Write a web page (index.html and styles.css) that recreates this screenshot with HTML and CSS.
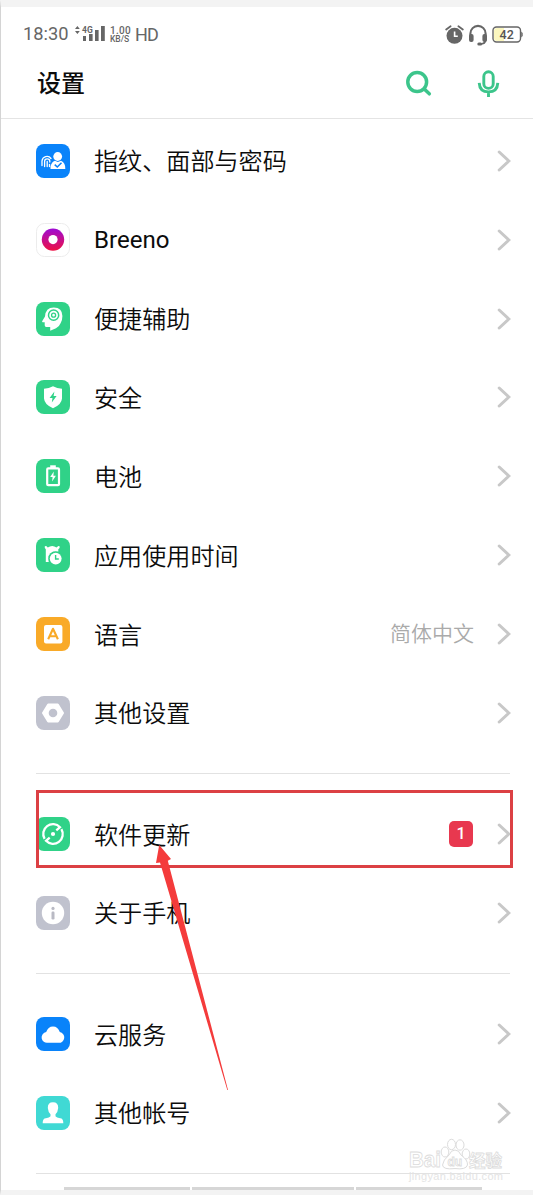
FILE: index.html
```
<!DOCTYPE html>
<html lang="zh-CN">
<head>
  <meta charset="utf-8">
  <title>设置</title>
  <link rel="stylesheet" href="styles.css">
</head>
<body>
<svg class="defs">
  <symbol id="arrow" viewBox="0 0 14 22"><path d="M2.2 2 L11.8 11 L2.2 20" fill="none" stroke="#c8c8c8" stroke-width="3" stroke-linecap="round" stroke-linejoin="miter"/></symbol>
</svg>

<div class="phone">
  <div class="status">
    <span class="clock">18:30</span>
    <svg class="signal" width="31" height="18" viewBox="0 0 31 18">
      <path d="M0 5 L2.4 2 L4.8 5z M0 7 L4.8 7 L2.4 10z" fill="#666"/>
      <g fill="#666"><rect x="8" y="12" width="3" height="5"/><rect x="14" y="10" width="3.6" height="7"/><rect x="20" y="6" width="3.6" height="11"/><rect x="26" y="2" width="3.8" height="15"/></g>
      <text x="7" y="8.6" class="net">4G</text>
    </svg>
    <div class="speed"><span class="rate">1.00</span><span>KB/S</span></div>
    <span class="hd">HD</span>
    <div class="status-right">
      <svg width="19" height="20" viewBox="0 0 19 20">
        <circle cx="9.5" cy="10.8" r="8" fill="#666"/>
        <path d="M1.2 4.5 L5.6 1.2 M17.8 4.5 L13.4 1.2" stroke="#666" stroke-width="1.8" stroke-linecap="round"/>
        <path d="M9.6 6.5 V11.3 H12.8" fill="none" stroke="#fff" stroke-width="1.6"/>
      </svg>
      <svg width="20" height="22" viewBox="0 0 20 22">
        <path d="M2.4 12 V9.5 A7.6 7.6 0 0 1 17.6 9.5 V12" fill="none" stroke="#666" stroke-width="2.1"/>
        <rect x="1" y="10" width="4.6" height="8" rx="2" fill="#666"/><rect x="14.4" y="10" width="4.6" height="8" rx="2" fill="#666"/>
        <path d="M17.5 16 Q17.5 20 12 20" fill="none" stroke="#666" stroke-width="1.7"/><rect x="9.3" y="18.4" width="4.8" height="3" rx="1.5" fill="#666"/>
      </svg>
      <svg width="31" height="17" viewBox="0 0 31 17">
        <rect x="1" y="1" width="27.5" height="15" rx="3.5" fill="#fff" stroke="#666" stroke-width="1.4"/>
        <path d="M5 2 H12 V15 H5 Q2 15 2 12 V5 Q2 2 5 2z" fill="#fbf7bf"/>
        <path d="M29.2 5.5 L30.7 7 V10 L29.2 11.5z" fill="#666"/>
        <text x="14.7" y="12.8" text-anchor="middle" class="level">42</text>
      </svg>
    </div>
  </div>

  <div class="header">
    <h1>设置</h1>
    <svg width="28" height="28" viewBox="0 0 28 28" fill="none" stroke="#3cc58b" stroke-width="3.5" stroke-linecap="round">
      <circle cx="12.2" cy="12" r="9.4"/><path d="M19.5 19.3 L24.3 23.8"/>
    </svg>
    <svg class="mic" width="24" height="28" viewBox="0 0 24 28" fill="none" stroke="#3cc58b" stroke-width="2.9">
      <rect x="6.8" y="1.8" width="9.4" height="16.6" rx="4.7"/><path d="M2.2 12.8 Q2.7 21.9 11.5 21.9 Q20.3 21.9 20.8 12.8 M11.5 22 V27"/>
    </svg>
  </div>

  <ul class="list">
    <li>
      <svg class="icon" viewBox="0 0 34 34"><rect width="34" height="34" rx="8" fill="#0983fa"/>
        <g fill="none" stroke="#fff" stroke-width="1.3" stroke-linecap="round"><path d="M6 21.5 V17 A5 5 0 0 1 15 14.5 M8.6 22.5 V17.5 A2.6 2.6 0 0 1 13.8 17.5 V18 M11.2 22.5 V17.5"/><path d="M13.5 20.5 V22.5"/></g>
        <circle cx="21.7" cy="12.5" r="4.4" fill="#fff"/><path d="M14.5 25 V22.5 Q15.5 18 19 16.8 L21.8 18 L25 16.8 Q29.5 18.5 29.3 25z" fill="#fff"/>
        <path d="M18.7 20.6 L21.3 23 L25.5 18.8" fill="none" stroke="#0983fa" stroke-width="1.5"/></svg>
      <span class="name">指纹、面部与密码</span><svg class="go"><use href="#arrow"/></svg>
    </li>
    <li>
      <svg class="icon" viewBox="0 0 34 34"><defs><linearGradient id="ring" x1="0" y1="0" x2="0" y2="1"><stop offset="0" stop-color="#9d0bd5"/><stop offset="1" stop-color="#ee1144"/></linearGradient></defs>
        <rect x=".5" y=".5" width="33" height="33" rx="8" fill="#fff" stroke="#ececec"/><circle cx="17" cy="16.6" r="11.2" fill="url(#ring)"/><circle cx="17" cy="16.6" r="4.6" fill="#fff"/></svg>
      <span class="name latin">Breeno</span><svg class="go"><use href="#arrow"/></svg>
    </li>
    <li>
      <svg class="icon" viewBox="0 0 34 34"><rect width="34" height="34" rx="8" fill="#30d288"/>
        <path d="M14.2 28.8 V25 H10.2 Q8.7 25 8.7 23.2 V20.2 H6.6 Q5.7 20 6.3 19 L9 14.5 Q9.5 5.4 17.8 5.4 Q26.4 5.6 26.4 14 Q26.4 18.2 24.7 21 Q23.3 24.7 20 26.2z" fill="#fff"/>
        <circle cx="17.6" cy="13.2" r="5.1" fill="none" stroke="#30d288" stroke-width="1.5"/><circle cx="17.6" cy="13.2" r="2" fill="none" stroke="#30d288" stroke-width="1.3"/></svg>
      <span class="name">便捷辅助</span><svg class="go"><use href="#arrow"/></svg>
    </li>
    <li>
      <svg class="icon" viewBox="0 0 34 34"><rect width="34" height="34" rx="8" fill="#30d288"/>
        <path d="M17 6.2 Q21 8.6 26 8.8 V18.5 Q25.5 24.7 17 28.2 Q8.5 24.7 8 18.5 V8.8 Q13 8.6 17 6.2z" fill="#fff"/>
        <path d="M18.4 11.5 L13.6 17.9 H16.5 L15.8 22.4 L20.6 16 H17.6z" fill="#30d288"/></svg>
      <span class="name">安全</span><svg class="go"><use href="#arrow"/></svg>
    </li>
    <li>
      <svg class="icon" viewBox="0 0 34 34"><rect width="34" height="34" rx="8" fill="#30d288"/>
        <rect x="14.2" y="6.3" width="5.6" height="3" fill="#fff"/><rect x="11.2" y="9.4" width="11.8" height="16.8" rx="1" fill="none" stroke="#fff" stroke-width="2.2"/>
        <path d="M17.8 12.6 L14.2 18 H16.6 L16.1 22.4 L19.9 16.8 H17.4z" fill="#fff"/></svg>
      <span class="name">电池</span><svg class="go"><use href="#arrow"/></svg>
    </li>
    <li>
      <svg class="icon" viewBox="0 0 34 34"><rect width="34" height="34" rx="8" fill="#30d288"/>
        <path d="M8.8 8.2 L10.2 8 L11.8 9.5 Q16.2 6.3 20.5 9.5 L22.3 8 L23.6 8.2 V10 L22.3 11.2 V13.8 H17 L12.7 18 V24 H9.8 V11.2 L8.8 10z" fill="#fff"/>
        <circle cx="19.7" cy="20.6" r="7.4" fill="#30d288"/><circle cx="19.7" cy="20.6" r="5.9" fill="#fff"/><path d="M19.6 17 V21 H22.8" fill="none" stroke="#30d288" stroke-width="1.4"/></svg>
      <span class="name">应用使用时间</span><svg class="go"><use href="#arrow"/></svg>
    </li>
    <li>
      <svg class="icon" viewBox="0 0 34 34"><rect width="34" height="34" rx="8" fill="#f9aa28"/>
        <rect x="8" y="8" width="18.4" height="18.4" rx="2" fill="#fff"/><path d="M12.2 22.3 L17 11.8 L21.9 22.3 M14 19.3 H20" fill="none" stroke="#f9aa28" stroke-width="2.1" stroke-linejoin="round"/></svg>
      <span class="name">语言</span><span class="value">简体中文</span><svg class="go"><use href="#arrow"/></svg>
    </li>
    <li>
      <svg class="icon" viewBox="0 0 34 34"><rect width="34" height="34" rx="8" fill="#c0c2ce"/>
        <path d="M12.2 8.5 H21.8 L27 17 L21.8 25.5 H12.2 L7 17z" fill="#fff" stroke="#fff" stroke-width="2" stroke-linejoin="round"/><circle cx="17" cy="17" r="4.3" fill="#c0c2ce"/></svg>
      <span class="name">其他设置</span><svg class="go"><use href="#arrow"/></svg>
    </li>
  </ul>

  <ul class="list">
    <li>
      <svg class="icon" viewBox="0 0 34 34"><rect width="34" height="34" rx="8" fill="#30d288"/>
        <g fill="none" stroke="#fff" stroke-width="2.3"><path d="M8.6 21.8 A9.7 9.7 0 0 1 24 10.2 L20.3 13.4 M25.4 12.2 A9.7 9.7 0 0 1 10 23.8 L13.7 20.6"/></g><circle cx="17" cy="17" r="2.1" fill="#fff"/></svg>
      <span class="name">软件更新</span><span class="badge">1</span><svg class="go"><use href="#arrow"/></svg>
    </li>
    <li>
      <svg class="icon" viewBox="0 0 34 34"><rect width="34" height="34" rx="8" fill="#c0c2ce"/>
        <circle cx="17" cy="17" r="11.2" fill="#fff"/><circle cx="17" cy="12.4" r="1.6" fill="#b9bac4"/><rect x="15.5" y="15.5" width="3" height="8" rx="1.2" fill="#b9bac4"/></svg>
      <span class="name">关于手机</span><svg class="go"><use href="#arrow"/></svg>
    </li>
  </ul>

  <ul class="list">
    <li>
      <svg class="icon" viewBox="0 0 34 34"><rect width="34" height="34" rx="8" fill="#0983fa"/>
        <path d="M11.8 25.8 A5.4 5.4 0 0 1 10.2 15.1 Q12 9.4 17 9.4 Q22 9.4 23.8 15.1 A5.4 5.4 0 0 1 22.4 25.8z" fill="#fff"/></svg>
      <span class="name">云服务</span><svg class="go"><use href="#arrow"/></svg>
    </li>
    <li>
      <svg class="icon" viewBox="0 0 34 34"><rect width="34" height="34" rx="8" fill="#40d9d4"/>
        <path d="M17 6.2 Q22.4 6.2 22.2 12 Q21.8 16.3 19.5 18.3 V20.3 Q20 21.5 25.5 22.5 Q27.3 23.4 27.3 27.3 H6.7 Q6.7 23.4 8.5 22.5 Q14 21.5 14.5 20.3 V18.3 Q12.2 16.3 11.8 12 Q11.6 6.2 17 6.2z" fill="#fff"/></svg>
      <span class="name">其他帐号</span><svg class="go"><use href="#arrow"/></svg>
    </li>
  </ul>

  <div class="nav"><i></i><i class="wide"></i><i></i></div>

  <!-- marks drawn over the list -->
  <div class="mark-box"></div>
  <svg class="mark-arrow" width="80" height="250" viewBox="0 0 80 250"><path d="M8.2 0 L20 14 L16.8 15.8 L77 245 L76.3 245 L9 17.5 L5 18z" fill="#f43b3b"/></svg>
  <svg class="watermark" width="110" height="52" viewBox="0 0 110 52">
    <g fill="#fff" stroke="#d9d9d9" stroke-width="1">
      <ellipse cx="38" cy="16" rx="3.8" ry="5"/><ellipse cx="44.5" cy="8.5" rx="4" ry="5.2"/><ellipse cx="53" cy="9" rx="4" ry="5.2"/><ellipse cx="59" cy="18" rx="3.8" ry="5"/>
      <path d="M48 14 Q52 14 54 19 Q61 24 60.5 29 Q59 34 48 32.5 Q36 34 35.5 29 Q36 24 42 19 Q44 14 48 14z"/>
      <g stroke-width=".8">
        <text x="2" y="31" class="wm-logo" textLength="32" lengthAdjust="spacingAndGlyphs">Bai</text>
        <text x="40.5" y="29.5" class="wm-du">du</text>
        <text x="62" y="31" class="wm-cn">经验</text>
      </g>
    </g>
    <text x="2" y="44" class="wm-url" textLength="94">jingyan.baidu.com</text>
  </svg>
</div>
</body>
</html>
```
FILE: styles.css
```
body {
  margin: 0;
  background: #fff;
  color: #0c0c0c;
  font-family: Roboto, "Noto Sans CJK SC", sans-serif;
}
.defs { position: absolute; width: 0; height: 0; }

.phone {
  position: relative;
  box-sizing: border-box;
  display: flex;
  flex-direction: column;
  height: 1195px;
  overflow: hidden;
  border-top: 7px solid #f3f3f3;
  border-left: 1px solid #d4d4d4;
  border-bottom: 5px solid #f3f3f3;
}

.status {
  display: flex;
  align-items: center;
  height: 55px;
  padding: 0 10px 0 22px;
  color: #666;
  line-height: 1;
}
.clock { width: 52px; font-size: 18.3px; }
.signal { margin-right: 4px; margin-top: -3px; }
.net { font: 700 8.5px Roboto, sans-serif; fill: #666; }
.speed { width: 25px; font-size: 8.5px; line-height: 9px; font-weight: 500; }
.speed span { display: block; }
.speed .rate { font-size: 10px; letter-spacing: .3px; }
.hd { font-size: 18px; letter-spacing: -.9px; }
.status-right { display: flex; align-items: center; gap: 4px; margin-left: auto; }
.level { font: 500 12.5px Roboto, sans-serif; fill: #555; }

.header {
  display: flex;
  align-items: center;
  height: 56px;
  padding: 0 32px 0 36px;
  border-bottom: 1px solid #e4e4e4;
}
.header svg { margin-bottom: 12px; }
.header .mic { margin-left: 44px; }
h1 {
  flex: 1;
  margin: 0 0 13px;
  font-size: 24px;
  font-weight: 500;
  line-height: 30px;
}

.list {
  margin: 0 23px 0 35px;
  padding: 20.6px 0;
  list-style: none;
  border-bottom: 1px solid #e2e2e2;
}
.header + .list { padding-top: 2.3px; }
.list li { display: flex; align-items: center; height: 78.9px; }
.icon { width: 34px; height: 34px; margin-right: 24px; }
.name {
  flex: 1;
  padding-bottom: 1px;
  font-family: "Noto Sans CJK SC", sans-serif;
  font-size: 24.1px;
  font-weight: 350;
  line-height: 34px;
}
.latin { padding: 1px 0 0; font-family: Roboto, sans-serif; font-weight: 400; }
.value { margin-right: 23px; color: #aaa; font-size: 21px; font-weight: 350; line-height: 30px; }
.go { width: 14px; height: 22px; margin-right: -1px; }
.badge {
  width: 24px;
  height: 26px;
  margin-right: 24px;
  border-radius: 5px;
  background: #e8384f;
  color: #fff;
  font-size: 16px;
  font-weight: 500;
  line-height: 26px;
  text-align: center;
}

.nav { display: flex; gap: 2px; margin: auto 0 0 63px; }
.nav i { width: 126px; height: 3px; background: #d6d6d6; }
.nav .wide { width: 162px; }

.mark-box {
  position: absolute;
  left: 35px;
  top: 783px;
  width: 471px;
  height: 72px;
  border: 3px solid #dc4044;
}
.mark-arrow { position: absolute; left: 150px; top: 838px; }

.watermark { position: absolute; left: 406px; top: 1129px; opacity: .9; }
.wm-logo { font: 700 22px "Liberation Sans", sans-serif; }
.wm-du { font: 700 12px "Liberation Sans", sans-serif; }
.wm-cn { font: 700 16.5px "Noto Sans CJK SC", sans-serif; }
.wm-url { font: 11px "Liberation Sans", sans-serif; fill: #e2e2e2; }
```
